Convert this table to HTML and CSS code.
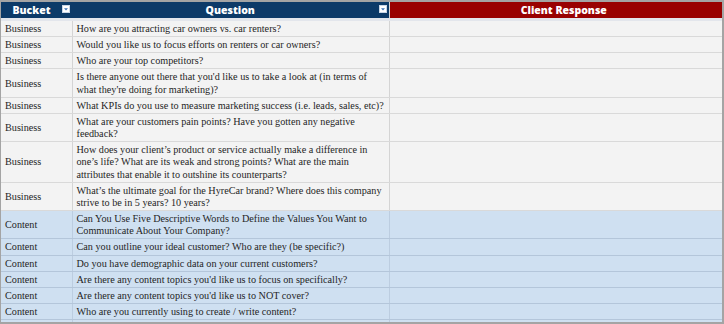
FILE: index.html
```html
<!DOCTYPE html>
<html>
<head>
<meta charset="utf-8">
<link rel="stylesheet" href="styles.css">
</head>
<body>
<div class="sheet">
  <table class="grid">
    <colgroup>
      <col class="c-bucket">
      <col class="c-question">
      <col class="c-response">
    </colgroup>
    <thead>
      <tr>
        <th class="h-bucket"><span class="h-label">Bucket</span><span class="dd"><svg viewBox="0 0 8 8" width="8" height="8"><rect x="0.5" y="0.5" width="7" height="7" fill="#fff" stroke="#c9d6e6"/><path d="M2 3.2h4L4 5.6z" fill="#3b72b5"/></svg></span></th>
        <th class="h-question"><span class="h-label">Question</span><span class="dd"><svg viewBox="0 0 8 8" width="8" height="8"><rect x="0.5" y="0.5" width="7" height="7" fill="#fff" stroke="#c9d6e6"/><path d="M2 3.2h4L4 5.6z" fill="#3b72b5"/></svg></span></th>
        <th class="h-response"><span class="h-label">Client Response</span></th>
      </tr>
    </thead>
    <tbody>
      <tr class="biz"><td class="b">Business</td><td class="q">How are you attracting car owners vs. car renters?</td><td></td></tr>
      <tr class="biz"><td class="b">Business</td><td class="q">Would you like us to focus efforts on renters or car owners?</td><td></td></tr>
      <tr class="biz"><td class="b">Business</td><td class="q">Who are your top competitors?</td><td></td></tr>
      <tr class="biz"><td class="b">Business</td><td class="q">Is there anyone out there that you'd like us to take a look at (in terms of what they're doing for marketing)?</td><td></td></tr>
      <tr class="biz"><td class="b">Business</td><td class="q">What KPIs do you use to measure marketing success (i.e. leads, sales, etc)?</td><td></td></tr>
      <tr class="biz"><td class="b">Business</td><td class="q">What are your customers pain points? Have you gotten any negative feedback?</td><td></td></tr>
      <tr class="biz"><td class="b">Business</td><td class="q">How does your client’s product or service actually make a difference in one’s life? What are its weak and strong points? What are the main attributes that enable it to outshine its counterparts?</td><td></td></tr>
      <tr class="biz"><td class="b">Business</td><td class="q">What’s the ultimate goal for the HyreCar brand? Where does this company strive to be in 5 years? 10 years?</td><td></td></tr>
      <tr class="con"><td class="b">Content</td><td class="q">Can You Use Five Descriptive Words to Define the Values You Want to Communicate About Your Company?</td><td></td></tr>
      <tr class="con"><td class="b">Content</td><td class="q">Can you outline your ideal customer? Who are they (be specific?)</td><td></td></tr>
      <tr class="con"><td class="b">Content</td><td class="q">Do you have demographic data on your current customers?</td><td></td></tr>
      <tr class="con"><td class="b">Content</td><td class="q">Are there any content topics you'd like us to focus on specifically?</td><td></td></tr>
      <tr class="con"><td class="b">Content</td><td class="q">Are there any content topics you'd like us to NOT cover?</td><td></td></tr>
      <tr class="con"><td class="b">Content</td><td class="q">Who are you currently using to create / write content?</td><td></td></tr>
      <tr class="con"><td class="b">&nbsp;</td><td class="q">&nbsp;</td><td></td></tr>
    </tbody>
  </table>
</div>
</body>
</html>
```
FILE: styles.css
```css
html, body {
  margin: 0;
  padding: 0;
  background: #ffffff;
}
.sheet {
  width: 724px;
  height: 324px;
  box-sizing: border-box;
  border-top: 2px solid #a4a4a4;
  border-left: 1px solid #a4a4a4;
  border-right: 2px solid #a4a4a4;
  border-bottom: 2px solid #a4a4a4;
  overflow: hidden;
  background: #cfe0f1;
}
.grid {
  border-collapse: collapse;
  table-layout: fixed;
  width: 721px;
}
.c-bucket { width: 71px; }
.c-question { width: 317px; }
.c-response { width: 333px; }

thead th {
  height: 16px;
  padding: 0;
  color: #ffffff;
  font-family: "Open Sans", "DejaVu Sans", sans-serif;
  font-weight: 800;
  font-size: 10.5px;
  line-height: 16px;
  text-align: center;
  position: relative;
  border-bottom: 3px solid #e3e6ec;
}
.h-bucket, .h-question {
  background: #0c3a68;
}
.h-bucket {
  padding-right: 10px;
}
.h-response {
  background: #990101;
  padding-left: 16px;
  border-left: 1px solid #d4d4d4;
}
.dd {
  position: absolute;
  top: 3px;
  right: 2px;
  width: 8px;
  height: 8px;
  display: block;
}
.dd svg { display: block; }

tbody td {
  height: 12px;
  padding: 2px 0 1px 4px;
  font-family: "Liberation Serif", "Times New Roman", serif;
  font-size: 10.2px;
  line-height: 12.15px;
  color: #1f1f1f;
  vertical-align: middle;
  text-align: left;
  overflow: hidden;
}
tr.biz td {
  background: #f3f3f3;
  border-bottom: 1px solid #d9d9d9;
  border-right: 1px solid #d4d4d4;
}
tr.con td {
  background: #cfe0f1;
  border-bottom: 1px solid #b4c6da;
  border-right: 1px solid #bccde0;
}
```
